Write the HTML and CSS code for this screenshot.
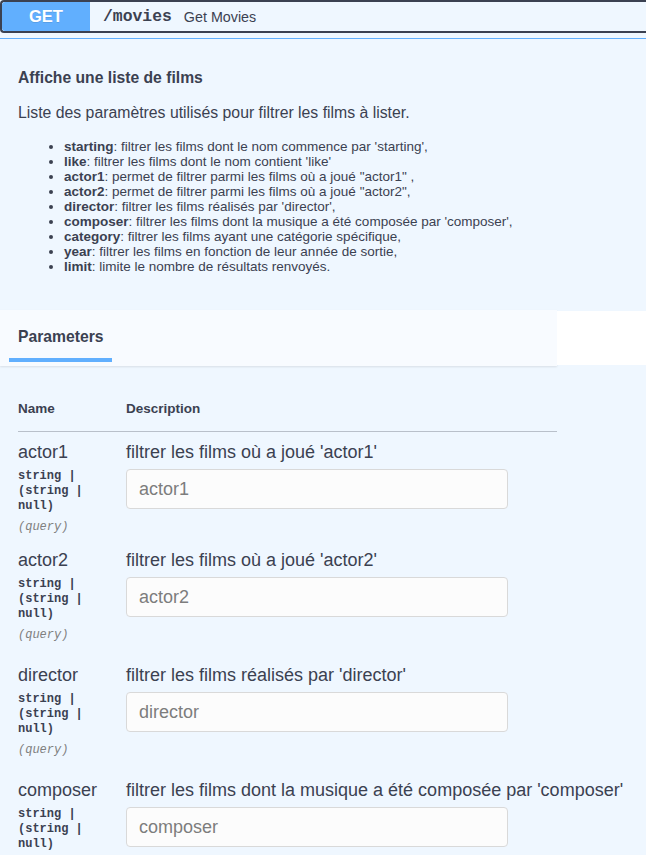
FILE: index.html
```html
<!DOCTYPE html>
<html lang="fr">
<head>
<meta charset="utf-8">
<title>GET /movies</title>
<link rel="stylesheet" href="styles.css">
</head>
<body>
<div class="opblock">
  <div class="summary-wrap">
    <div class="summary">
      <span class="method">GET</span>
      <span class="path">/movies</span>
      <span class="summary-text">Get Movies</span>
    </div>
  </div>

  <div class="description">
    <h4 class="desc-title">Affiche une liste de films</h4>
    <p class="desc-intro">Liste des paramètres utilisés pour filtrer les films à lister.</p>
    <ul class="desc-list">
      <li><strong>starting</strong>: filtrer les films dont le nom commence par 'starting',</li>
      <li><strong>like</strong>: filtrer les films dont le nom contient 'like'</li>
      <li><strong>actor1</strong>: permet de filtrer parmi les films où a joué "actor1" ,</li>
      <li><strong>actor2</strong>: permet de filtrer parmi les films où a joué "actor2",</li>
      <li><strong>director</strong>: filtrer les films réalisés par 'director',</li>
      <li><strong>composer</strong>: filtrer les films dont la musique a été composée par 'composer',</li>
      <li><strong>category</strong>: filtrer les films ayant une catégorie spécifique,</li>
      <li><strong>year</strong>: filtrer les films en fonction de leur année de sortie,</li>
      <li><strong>limit</strong>: limite le nombre de résultats renvoyés.</li>
    </ul>
  </div>

  <div class="section-header">
    <div class="tab-area">
      <div class="tab">Parameters</div>
    </div>
    <div class="tab-filler"></div>
  </div>

  <div class="params">
    <div class="params-head">
      <span>Name</span>
      <span>Description</span>
    </div>

    <div class="param-row">
      <div class="param-name-col">
        <div class="param-name">actor1</div>
        <div class="param-type">string | (string | null)</div>
        <div class="param-in">(query)</div>
      </div>
      <div class="param-desc-col">
        <div class="param-desc">filtrer les films où a joué 'actor1'</div>
        <input class="param-input" type="text" placeholder="actor1">
      </div>
    </div>

    <div class="param-row">
      <div class="param-name-col">
        <div class="param-name">actor2</div>
        <div class="param-type">string | (string | null)</div>
        <div class="param-in">(query)</div>
      </div>
      <div class="param-desc-col">
        <div class="param-desc">filtrer les films où a joué 'actor2'</div>
        <input class="param-input" type="text" placeholder="actor2">
      </div>
    </div>

    <div class="param-row">
      <div class="param-name-col">
        <div class="param-name">director</div>
        <div class="param-type">string | (string | null)</div>
        <div class="param-in">(query)</div>
      </div>
      <div class="param-desc-col">
        <div class="param-desc">filtrer les films réalisés par 'director'</div>
        <input class="param-input" type="text" placeholder="director">
      </div>
    </div>

    <div class="param-row">
      <div class="param-name-col">
        <div class="param-name">composer</div>
        <div class="param-type">string | (string | null)</div>
        <div class="param-in">(query)</div>
      </div>
      <div class="param-desc-col">
        <div class="param-desc">filtrer les films dont la musique a été composée par 'composer'</div>
        <input class="param-input" type="text" placeholder="composer">
      </div>
    </div>
  </div>
</div>
</body>
</html>
```

FILE: styles.css
```css
html, body {
  margin: 0;
  padding: 0;
}

body {
  background: #eff7ff;
  color: #3b4151;
  font-family: "Liberation Sans", Arial, sans-serif;
  overflow: hidden;
}

.opblock {
  background: #eff7ff;
  min-height: 855px;
}

/* ---------- summary ---------- */
.summary-wrap {
  padding-bottom: 5px;
  border-bottom: 1px solid #61affe;
}

.summary {
  display: flex;
  align-items: center;
  height: 33px;
  box-sizing: border-box;
  border: 2px solid #3b4151;
  border-right: none;
  border-radius: 4px 0 0 4px;
}

.method {
  width: 88px;
  height: 29px;
  display: flex;
  align-items: center;
  justify-content: center;
  background: #61affe;
  color: #fff;
  font-weight: bold;
  font-size: 16.5px;
  border-radius: 3px 0 0 3px;
  text-shadow: 0 1px 0 rgba(0, 0, 0, .1);
}

.path {
  margin-left: 13px;
  font-family: "Liberation Mono", "DejaVu Sans Mono", monospace;
  font-weight: bold;
  font-size: 16.4px;
  color: #3b4151;
}

.summary-text {
  margin-left: 12px;
  font-size: 14.3px;
  color: #3b4151;
}

/* ---------- description ---------- */
.description {
  padding: 30px 18px 36px;
}

.desc-title {
  margin: 0;
  font-size: 15.7px;
  line-height: 18px;
  font-weight: bold;
}

.desc-intro {
  margin: 16px 0 0;
  font-size: 15.8px;
  line-height: 19px;
}

.desc-list {
  margin: 17px 0 0;
  padding-left: 46px;
  font-size: 13.5px;
  line-height: 15px;
}

/* ---------- section header ---------- */
.section-header {
  display: flex;
  height: 56px;
}

.tab-area {
  width: 557px;
  background: #f8fbff;
  box-shadow: 0 1px 2px rgba(0, 0, 0, .1);
}

.tab {
  margin-left: 9px;
  width: 103px;
  box-sizing: border-box;
  padding: 18px 9px 13px;
  font-size: 15.7px;
  line-height: 17px;
  font-weight: bold;
  border-bottom: 4px solid #61affe;
}

.tab-filler {
  flex: 1;
  background: #fff;
  margin: 1px 0;
}

/* ---------- parameters ---------- */
.params {
  margin-left: 18px;
  width: 539px;
}

.params-head {
  display: grid;
  grid-template-columns: 108px 1fr;
  padding: 35px 0 15px;
  font-size: 13.5px;
  line-height: 15px;
  font-weight: bold;
  border-bottom: 1px solid rgba(59, 65, 81, .3);
}

.param-row {
  display: grid;
  grid-template-columns: 108px 1fr;
  padding: 10px 0 12px;
}

.params-head + .param-row {
  padding-bottom: 5px;
}

.param-name-col {
  padding-right: 10px;
}

.param-name {
  font-size: 18px;
  line-height: 20px;
}

.param-type {
  margin-top: 7px;
  font-family: "Liberation Mono", "DejaVu Sans Mono", monospace;
  font-weight: bold;
  font-size: 12px;
  line-height: 15px;
}

.param-in {
  margin-top: 6px;
  font-family: "Liberation Mono", "DejaVu Sans Mono", monospace;
  font-style: italic;
  font-size: 12px;
  line-height: 15px;
  color: #808080;
}

.param-desc {
  font-size: 18px;
  line-height: 20px;
  white-space: nowrap;
}

.param-input {
  display: block;
  margin-top: 7px;
  width: 382px;
  height: 40px;
  box-sizing: border-box;
  padding: 0 12px;
  border: 1px solid #d9d9d9;
  border-radius: 4px;
  background: #fcfcfc;
  font-family: "Liberation Sans", Arial, sans-serif;
  font-size: 18px;
  color: #3b4151;
  outline: none;
}

.param-input::placeholder {
  color: #7d7d7d;
}
```
